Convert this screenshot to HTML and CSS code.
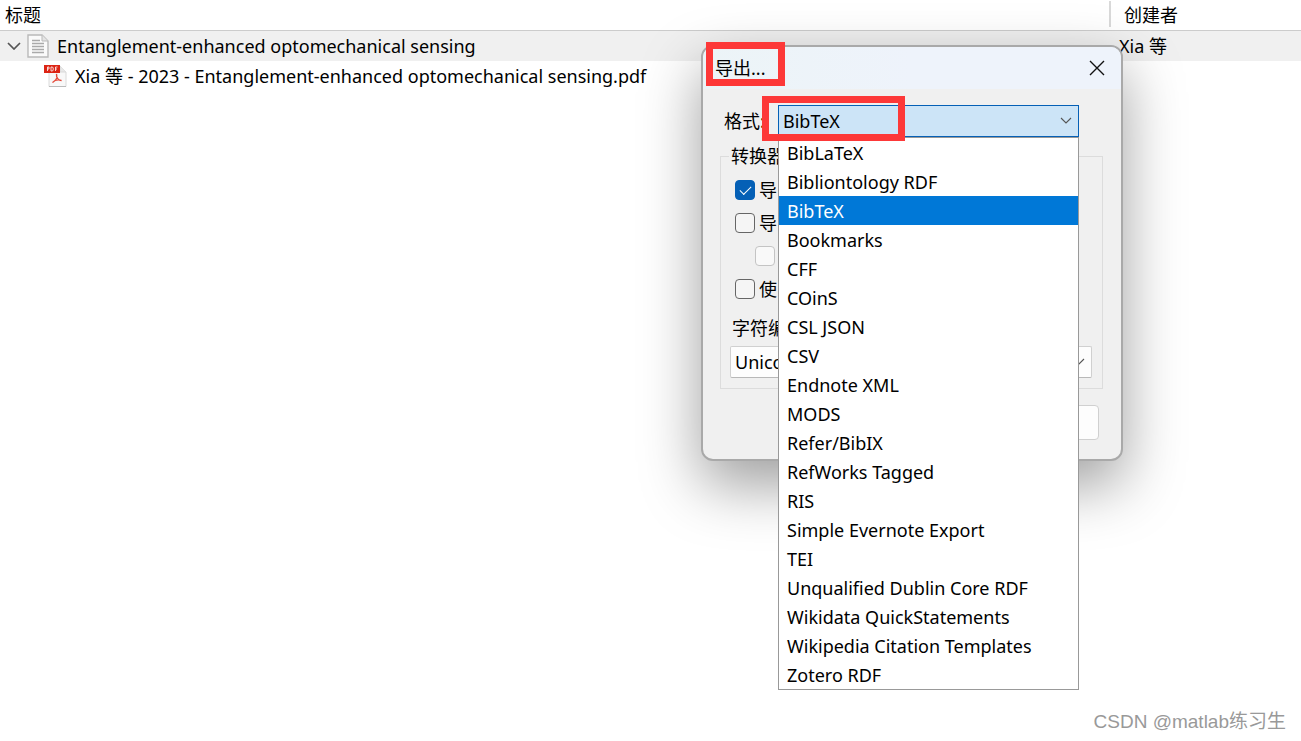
FILE: index.html
```html
<!DOCTYPE html>
<html lang="zh-CN">
<head>
<meta charset="utf-8">
<title>导出</title>
<link rel="stylesheet" href="styles.css">
</head>
<body>
<main class="library">
  <table class="items">
    <colgroup><col><col class="col-creator"></colgroup>
    <thead>
      <tr><th>标题</th><th class="creator-head">创建者</th></tr>
    </thead>
    <tbody>
      <tr class="selected">
        <td>
          <div class="item">
            <svg class="twisty" viewBox="0 0 14 8" width="14" height="8"><path d="M1 1l6 6 6-6" fill="none" stroke="#555" stroke-width="1.7"/></svg>
            <svg class="item-icon" viewBox="0 0 22 24" width="22" height="24">
              <path d="M1 1h14l6 6v16H1z" fill="#fafafa" stroke="#b9b9b9" stroke-width="1.4"/>
              <path d="M15 1v6h6" fill="#e4e4e4" stroke="#b9b9b9"/>
              <path d="M5 6.500h8M5 9.500h12M5 12.500h12M5 15.500h12M5 18.500h12" stroke="#aaa" stroke-width="1.3"/>
            </svg>
            <span>Entanglement-enhanced optomechanical sensing</span>
          </div>
        </td>
        <td class="creator">Xia 等</td>
      </tr>
      <tr>
        <td>
          <div class="item child">
            <svg class="item-icon" viewBox="0 0 24 24" width="24" height="24">
              <path d="M6 2h11l6 6v14.500H6z" fill="#f8f8f8" stroke="#dadada"/>
              <path d="M6 22.500h17" stroke="#bbb"/>
              <path d="M17 2v6h6" fill="#e8e8e8" stroke="#d8d8d8"/>
              <path d="M1 1h16v8H1z" fill="#dc2414"/>
              <path d="M4.500 7v-4h1.500v2H4.500M8 3v4h1.500l.7-1v-2l-.7-1zM12.500 7v-4h2M12.500 5H14" fill="none" stroke="#fff" stroke-width=".8"/>
              <path d="M13.500 10c1 3-.5 6.500-4 8.500 2-2 6-3 9-2-3 0-5.500-3-5-6.500z" fill="none" stroke="#e5493a" stroke-width="1.3"/>
            </svg>
            <span>Xia 等 - 2023 - Entanglement-enhanced optomechanical sensing.pdf</span>
          </div>
        </td>
        <td></td>
      </tr>
    </tbody>
  </table>
</main>

<section class="dialog" role="dialog" aria-labelledby="dialog-title">
  <header class="titlebar">
    <h1 id="dialog-title" class="title">导出...</h1>
    <button class="close" type="button" aria-label="关闭">
      <svg viewBox="0 0 16 16" width="16" height="16"><path d="M1 1l14 14M15 1L1 15" stroke="#111" stroke-width="1.4"/></svg>
    </button>
  </header>
  <form class="content">
    <div class="format-row">
      <label for="format">格式:</label>
      <div class="combo format-combo">
        <select id="format" class="select active"><option>BibTeX</option></select>
        <svg class="arrow" viewBox="0 0 12 8" width="12" height="8"><path d="M1 1l5 5 5-5" fill="none" stroke="#555" stroke-width="1.1"/></svg>
        <ul class="popup" role="listbox" aria-label="格式">
          <li role="option">BibLaTeX</li>
          <li role="option">Bibliontology RDF</li>
          <li role="option" aria-selected="true" class="current">BibTeX</li>
          <li role="option">Bookmarks</li>
          <li role="option">CFF</li>
          <li role="option">COinS</li>
          <li role="option">CSL JSON</li>
          <li role="option">CSV</li>
          <li role="option">Endnote XML</li>
          <li role="option">MODS</li>
          <li role="option">Refer/BibIX</li>
          <li role="option">RefWorks Tagged</li>
          <li role="option">RIS</li>
          <li role="option">Simple Evernote Export</li>
          <li role="option">TEI</li>
          <li role="option">Unqualified Dublin Core RDF</li>
          <li role="option">Wikidata QuickStatements</li>
          <li role="option">Wikipedia Citation Templates</li>
          <li role="option">Zotero RDF</li>
        </ul>
      </div>
    </div>
    <fieldset class="options">
      <legend>转换器</legend>
      <div class="checks">
        <label class="check"><input type="checkbox" checked>导</label>
        <label class="check"><input type="checkbox">导</label>
        <label class="check nested"><input type="checkbox" aria-label="注释" disabled></label>
        <label class="check"><input type="checkbox">使</label>
      </div>
      <label class="charset-label" for="charset">字符编</label>
      <div class="combo">
        <select id="charset" class="select"><option>Unico</option></select>
        <svg class="arrow" viewBox="0 0 12 8" width="12" height="8"><path d="M1 1l5 5 5-5" fill="none" stroke="#555" stroke-width="1.1"/></svg>
      </div>
    </fieldset>
    <div class="actions"><button class="button" type="button" aria-label="取消"></button></div>
  </form>
</section>

<div class="mark mark-title"></div>
<div class="mark mark-format"></div>
<p class="watermark">CSDN @matlab练习生</p>
</body>
</html>
```
FILE: styles.css
```css
* { box-sizing: border-box; }

body {
  margin: 0;
  min-height: 100vh;
  background: #fff;
  color: #000;
  font: 18px/24px "Noto Sans", "Noto Sans CJK SC", sans-serif;
  overflow: hidden;
}

.items {
  width: 100%;
  table-layout: fixed;
  border-spacing: 0;
}
.col-creator { width: 192px; }
.items th {
  height: 31px;
  padding: 0 5px;
  border-bottom: 1px solid #ccc;
  font-weight: 400;
  text-align: left;
}
.items .creator-head {
  padding-left: 15px;
  background: linear-gradient(#d9d9d9, #d9d9d9) 0 1px / 2px 26px no-repeat;
}
.items td {
  height: 30px;
  padding: 0;
  white-space: nowrap;
}
.selected { background: #f0f0f0; }
.items .creator { padding-left: 10px; }
.item {
  display: flex;
  align-items: center;
  gap: 8px;
  padding-left: 7px;
}
.twisty { margin-right: -2px; }
.child { padding-left: 43px; }

.dialog {
  position: absolute;
  top: 45px;
  left: 701px;
  width: 422px;
  border: 2px solid #a9a9a9;
  border-radius: 12px;
  background: #f0f0f0;
  box-shadow: 0 24px 60px rgba(0, 0, 0, .38);
}
.titlebar {
  display: flex;
  align-items: center;
  justify-content: space-between;
  height: 42px;
  padding: 0 14px 0 12px;
  border-radius: 10px 10px 0 0;
  background: linear-gradient(90deg, #ecf4f7, #eef3fb 50%);
}
.title {
  margin: 0;
  font-size: 18px;
  font-weight: 400;
}
.close {
  display: grid;
  place-items: center;
  width: 20px;
  height: 20px;
  padding: 0;
  border: 0;
  background: none;
}

.content { padding: 16px 18px 19px 17px; }
.format-row {
  display: flex;
  align-items: center;
  justify-content: space-between;
  padding: 0 24px 0 4px;
}
.format-row label { line-height: 22px; }
.combo { position: relative; }
.format-combo { width: 301px; }
.select {
  display: block;
  width: 100%;
  height: 32px;
  padding: 0 4px;
  appearance: none;
  border: 1px solid #d0d0d0;
  border-bottom-color: #b8b8b8;
  border-radius: 2px;
  background: #fdfdfd;
  color: #000;
  font: inherit;
}
.active {
  border-color: #0560b6;
  border-radius: 0;
  background: #cce4f7;
}
.arrow {
  position: absolute;
  top: 12px;
  right: 7px;
}

.popup {
  position: absolute;
  z-index: 2;
  top: 100%;
  left: 0;
  width: 100%;
  margin: 0;
  padding: 0;
  border: 1px solid #999;
  background: #fff;
  list-style: none;
}
.popup li {
  height: 29px;
  padding-left: 8px;
  line-height: 31px;
  white-space: nowrap;
}
.popup .current {
  background: #0078d7;
  color: #fff;
}

.options {
  margin: 7px 0 0;
  padding: 10px 10px 10px 9px;
  border: 1px solid #dcdcdc;
}
.options legend { padding: 0 2px; margin-left: -1px; }
.checks {
  display: grid;
  gap: 9px;
  padding-left: 5px;
}
.check {
  display: flex;
  align-items: center;
  gap: 4px;
  min-height: 24px;
}
.nested { padding-left: 20px; }
.check input {
  width: 20px;
  height: 20px;
  margin: 0;
  appearance: none;
  border: 1px solid #666;
  border-radius: 4px;
  background: #f5f5f5;
}
.check input:checked {
  display: grid;
  place-items: center;
  border-color: #0560b6;
  background: #0560b6;
}
.check input:checked::after {
  content: "";
  width: 10px;
  height: 5px;
  margin-bottom: 3px;
  border: solid #fff;
  border-width: 0 0 1px 1px;
  transform: rotate(-45deg);
}
.check input:disabled {
  border-color: #c4c4c4;
  background: #f9f9f9;
}
.charset-label {
  display: block;
  margin: 15px 2px 6px;
}
.actions {
  display: flex;
  justify-content: flex-end;
  padding: 16px 4px 0;
}
.button {
  width: 100px;
  height: 35px;
  border: 1px solid #d0d0d0;
  border-radius: 4px;
  background: #fdfdfd;
  font: inherit;
}

.mark {
  position: absolute;
  border: 7px solid #fd3838;
}
.mark-title { top: 42px; left: 706px; width: 79px; height: 44px; }
.mark-format { top: 96px; left: 762px; width: 143px; height: 45px; z-index: 3; }

.watermark {
  position: absolute;
  right: 15px;
  bottom: 7px;
  margin: 0;
  color: #999;
  font: 19px/24px "Liberation Sans", "Noto Sans CJK SC", sans-serif;
}
```
